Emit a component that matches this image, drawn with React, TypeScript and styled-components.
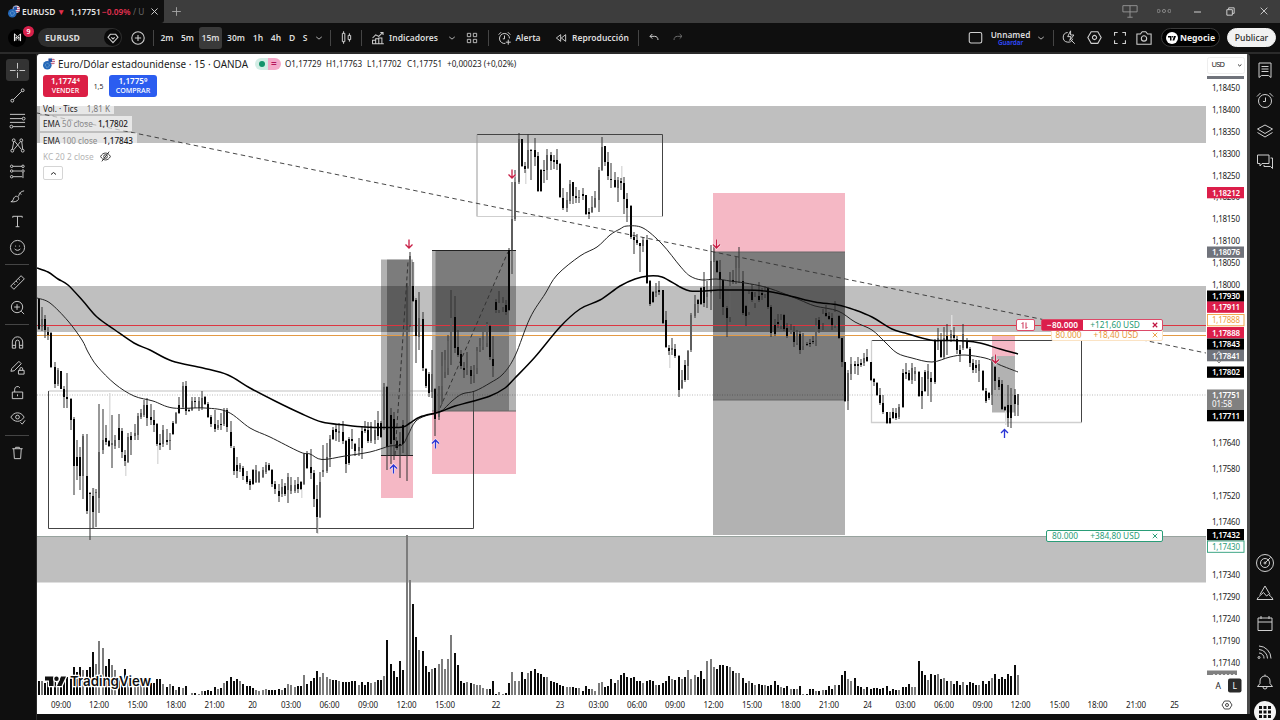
import React from "react";
import styled, { createGlobalStyle } from "styled-components";

const GlobalStyle = createGlobalStyle`
  * {
    box-sizing: border-box;
  }
  body {
    margin: 0;
    background: #0f0f0f;
    font-family: "Noto Sans", "Open Sans", sans-serif;
    overflow: hidden;
  }
`;

const Page = styled.div`
  display: flex;
  flex-direction: column;
  width: 1280px;
  height: 720px;
  background: #0f0f0f;
  color: #dbdbdb;
  overflow: hidden;
`;

const TabBar = styled.header`
  display: flex;
  flex: none;
  align-items: stretch;
  height: 23px;
  background: #3d3d3d;
`;

const Tab = styled.div`
  display: flex;
  align-items: center;
  width: 164px;
  padding-left: 8px;
  background: #0f0f0f;
  border-radius: 0 0 3px 0;
  font-size: 8.3px;
  font-weight: 600;
  white-space: nowrap;
`;

const TabText = styled.span<{ $w: number; $color?: string; $weight?: number }>`
  width: ${({ $w }) => $w}px;
  color: ${({ $color }) => $color || "#e6e6e6"};
  font-weight: ${({ $weight }) => $weight || 600};
  overflow: hidden;
`;

const TabSymbol = styled(TabText)`
  margin-left: 2px;
  font-size: 8.4px;
`;

const Spacer = styled.div`
  flex: 1;
`;

const Toolbar = styled.div`
  display: flex;
  flex: none;
  align-items: center;
  height: 31px;
  padding-right: 4px;
  border-bottom: 2px solid #2b2b2b;
`;

const Slot = styled.div<{ $w: number; $ml?: number; $mr?: number; $active?: boolean }>`
  position: relative;
  display: flex;
  flex: none;
  align-items: center;
  justify-content: center;
  width: ${({ $w }) => $w}px;
  height: 22px;
  margin-left: ${({ $ml }) => $ml || 0}px;
  margin-right: ${({ $mr }) => $mr || 0}px;
  border-radius: 3px;
  background: ${({ $active }) => ($active ? "#3a3a3a" : "transparent")};
  font-size: 8.5px;
  font-weight: 600;
  white-space: nowrap;
`;

const Divider = styled.div<{ $ml?: number; $mr?: number }>`
  flex: none;
  width: 1px;
  height: 16px;
  margin-left: ${({ $ml }) => $ml || 0}px;
  margin-right: ${({ $mr }) => $mr || 0}px;
  background: #454545;
`;

const Avatar = styled.div`
  display: flex;
  align-items: center;
  justify-content: center;
  width: 18px;
  height: 18px;
  border-radius: 50%;
  background: #000;
`;

const Badge = styled.span`
  position: absolute;
  top: -1px;
  right: 0;
  width: 11px;
  height: 11px;
  border-radius: 50%;
  background: #d7214b;
  color: #fff;
  font-size: 7px;
  line-height: 11px;
  text-align: center;
`;

const SearchPill = styled.div`
  display: flex;
  align-items: center;
  justify-content: space-between;
  width: 84px;
  height: 19px;
  margin-left: 4px;
  padding: 0 1px 0 7px;
  border-radius: 10px;
  background: #2e2e2e;
  font-size: 8.7px;
  font-weight: 700;
`;

const PillIcon = styled.span`
  display: flex;
  align-items: center;
  justify-content: center;
  width: 17px;
  height: 17px;
  border-radius: 50%;
  background: #0a0a0a;
`;

const LayoutName = styled.div`
  display: flex;
  flex-direction: column;
  align-items: center;
  line-height: 9px;
  font-size: 8.3px;
  small {
    color: #2f4bff;
    font-size: 6.3px;
    line-height: 7px;
  }
`;

const PillButton = styled.button<{ $w: number; $light?: boolean }>`
  display: flex;
  flex: none;
  align-items: center;
  justify-content: center;
  gap: 2px;
  width: ${({ $w }) => $w}px;
  height: 19px;
  margin-left: ${({ $light }) => ($light ? 7 : 0)}px;
  padding: 0;
  border: 1px solid ${({ $light }) => ($light ? "#f2f2f2" : "#3a3a3a")};
  border-radius: 10px;
  background: ${({ $light }) => ($light ? "#f2f2f2" : "#000")};
  color: ${({ $light }) => ($light ? "#2a2a2a" : "#f0f0f0")};
  font-family: inherit;
  font-size: 8.6px;
  font-weight: ${({ $light }) => ($light ? 500 : 700)};
`;

const Body = styled.main`
  display: flex;
  flex: none;
  height: 660px;
`;

const LeftBar = styled.nav`
  display: flex;
  flex-direction: column;
  align-items: center;
  flex: none;
  width: 37px;
  height: 666px;
  padding: 3.4px 2px 0 0;
  border-right: 1px solid #2b2b2b;
`;

const RightBar = styled.nav`
  display: flex;
  flex-direction: column;
  align-items: center;
  flex: none;
  width: 30px;
  height: 673px;
  padding-top: 0.3px;
`;

const SideItem = styled.div<{ $h: number }>`
  display: flex;
  flex: none;
  align-items: center;
  justify-content: center;
  height: ${({ $h }) => $h}px;
`;

const SideActive = styled.div`
  display: flex;
  align-items: center;
  justify-content: center;
  width: 23px;
  height: 22px;
  border-radius: 3px;
  background: #333;
`;

const SideDivider = styled.div`
  flex: none;
  width: 24px;
  height: 1px;
  margin: 4px 0 4.6px;
  background: #454545;
`;

const AppsButton = styled.div`
  display: flex;
  align-items: center;
  justify-content: center;
  width: 22px;
  height: 22px;
  border-radius: 50%;
  background: #f4f4f4;
`;

const ChartPanel = styled.section`
  position: relative;
  flex: none;
  width: 1213px;
  height: 660px;
  border-right: 3px solid #4a4a4a;
  border-radius: 3px 3px 0 0;
  background: #fff;
  overflow: hidden;
`;

const ChartSvg = styled.svg`
  display: block;
`;

const Legend = styled.div`
  position: absolute;
  top: 2px;
  left: 3px;
  display: flex;
  flex-direction: column;
  align-items: flex-start;
  color: #1b1b1b;
  white-space: nowrap;
`;

const TitleRow = styled.div`
  display: flex;
  align-items: center;
  height: 15px;
  padding-left: 3px;
`;

const Title = styled.span`
  width: 193px;
  margin-left: 3px;
  font-size: 9.95px;
`;

const StatusPill = styled.span`
  display: flex;
  align-items: center;
  width: 26px;
  height: 12px;
  margin-left: 4px;
  border-radius: 6px;
  background: linear-gradient(90deg, #d3ede5 50%, #f4a9c9 50%);
  color: #b3155c;
  font-size: 10px;
  font-weight: 600;
  line-height: 11px;
`;

const StatusDot = styled.i`
  width: 6px;
  height: 6px;
  margin: 0 6px 0 4px;
  border-radius: 50%;
  background: #15936b;
`;

const Ohlc = styled.span<{ $w: number }>`
  width: ${({ $w }) => $w}px;
  padding-left: 4px;
  font-size: 8.15px;
`;

const TradeRow = styled.div`
  display: flex;
  align-items: center;
  height: 22px;
  margin: 4px 0 5px 3px;
`;

const TradeButton = styled.div<{ $w: number; $color: string }>`
  width: ${({ $w }) => $w}px;
  height: 22px;
  padding-top: 1px;
  border-radius: 3px;
  background: ${({ $color }) => $color};
  color: #fff;
  font-size: 8.1px;
  font-weight: 600;
  line-height: 10px;
  text-align: center;
  sup {
    font-size: 6px;
    line-height: 0;
    vertical-align: 2px;
  }
  span {
    display: block;
    font-size: 7.1px;
    font-weight: 500;
    line-height: 9px;
  }
`;

const Spread = styled.div`
  width: 21px;
  font-size: 6.8px;
  text-align: center;
`;

const StudyRow = styled.div<{ $w: number; $h: number; $plain?: boolean }>`
  display: flex;
  align-items: center;
  width: ${({ $w }) => $w}px;
  height: ${({ $h }) => $h}px;
  margin-bottom: 2px;
  padding-left: 3px;
  background: ${({ $plain }) => ($plain ? "transparent" : "rgba(255, 255, 255, 0.62)")};
  color: ${({ $plain }) => ($plain ? "#b5b5b5" : "#1b1b1b")};
  font-size: ${({ $plain }) => ($plain ? 8.3 : 8.1)}px;
  span {
    color: #8a8a8a;
    margin: 0 2px;
  }
  b {
    margin-left: auto;
    padding-right: 4px;
    font-weight: 500;
  }
  i {
    margin-left: auto;
    padding-right: 4px;
    color: #777;
    font-style: normal;
  }
  svg {
    margin-left: 6px;
  }
`;

const Collapse = styled.div`
  display: flex;
  align-items: center;
  justify-content: center;
  width: 20px;
  height: 14px;
  margin: 1px 0 0 3px;
  border: 1px solid #d5d5d5;
  border-radius: 2px;
`;

const OrderTag = styled.div<{ $x: number; $y: number; $w: number; $h?: number; $color: string; $faint?: boolean }>`
  position: absolute;
  left: ${({ $x }) => $x}px;
  top: ${({ $y }) => $y}px;
  display: flex;
  align-items: center;
  width: ${({ $w }) => $w}px;
  height: ${({ $h }) => $h || 12}px;
  border: 1px solid ${({ $color, $faint }) => ($faint ? "#fbe3c4" : $color)};
  border-radius: 2px;
  background: #fff;
  color: ${({ $color }) => $color};
  font-size: 8.3px;
  line-height: 10px;
  white-space: nowrap;
`;

const OrderQty = styled.span<{ $w: number; $fill?: boolean }>`
  width: ${({ $w }) => $w}px;
  height: 100%;
  background: ${({ $fill }) => ($fill ? "#db1f4b" : "transparent")};
  color: ${({ $fill }) => ($fill ? "#fff" : "inherit")};
  font-weight: ${({ $fill }) => ($fill ? 600 : 400)};
  text-align: center;
`;

const OrderProfit = styled.span<{ $color?: string }>`
  flex: 1;
  color: ${({ $color }) => $color || "inherit"};
  text-align: center;
`;

const OrderClose = styled.span`
  display: flex;
  justify-content: center;
  width: 15px;
`;

interface IconProps {
  d: string;
  size?: number;
  color?: string;
  width?: number;
}

const Icon: React.FC<IconProps> = ({ d, size = 18, color = "#cfcfcf", width = 1 }) => (
  <svg width={size} height={size} viewBox="0 0 18 18" fill="none" stroke={color} strokeWidth={width}>
    <path d={d} />
  </svg>
);

const icons = {
  cross: "M9 1v6M9 11v6M1 9h6M11 9h6M8.5 9h1",
  trend: "M4.5 13.5l9-9M2 14.5a1.5 1.5 0 1 0 3 0a1.5 1.5 0 1 0-3 0M13 3.5a1.5 1.5 0 1 0 3 0a1.5 1.5 0 1 0-3 0",
  fib: "M1 2.500h16M1 7h13M14 7a1.5 1.5 0 1 0 3 0a1.5 1.5 0 1 0-3 0M1 11h16M4 15.500h13M1 15.500a1.5 1.5 0 1 0 3 0a1.5 1.5 0 1 0-3 0",
  pattern: "M3.500 13L5 5M6 4.500l7 8.500M5 13.500l7-8.500M13.500 5l1 8M2 14.500a1.500 1.500 0 1 0 3 0a1.500 1.500 0 1 0-3 0M3.500 3.500a1.500 1.500 0 1 0 3 0a1.500 1.500 0 1 0-3 0M11.500 3.500a1.500 1.500 0 1 0 3 0a1.500 1.500 0 1 0-3 0M13 14.500a1.500 1.500 0 1 0 3 0a1.500 1.500 0 1 0-3 0",
  forecast: "M4 3.500h10M4 8.500h9M4 14.500h10M1.500 3.500a1.300 1.300 0 1 0 2.600 0a1.300 1.300 0 1 0-2.600 0M13.500 3.500a1.300 1.300 0 1 0 2.600 0a1.300 1.300 0 1 0-2.600 0M1.500 8.500a1.300 1.300 0 1 0 2.600 0a1.300 1.300 0 1 0-2.600 0M1.500 14.500a1.300 1.300 0 1 0 2.600 0a1.300 1.300 0 1 0-2.600 0M13.500 8.500a1.300 1.300 0 1 0 2.600 0a1.300 1.300 0 1 0-2.600 0M14.800 10v6",
  brush: "M2 14.500c3 0 2-4 4.500-5.500c2-1 4.500 1 3.500 3c-1 2.500-5 3-8 2.500M10 9c1-4 3-5.500 6-6M11 5l2 2",
  text: "M4 5V3.500h10V5M9 3.500v11M7 14.500h4",
  smile: "M1.500 9a7.500 7.500 0 1 0 15 0a7.500 7.500 0 1 0-15 0M6.500 7.500h1M10.500 7.500h1M6 10.500c1.500 2 4.500 2 6 0",
  ruler: "M1.800 12.800l11-11l3.400 3.400l-11 11zM5 10l1.500 1.500M7.500 7.500L9 9M10 5l1.500 1.500",
  zoom: "M2.500 8.500a6 6 0 1 0 12 0a6 6 0 1 0-12 0M13 13l3 3M8.500 5.500v6M5.500 8.500h6",
  magnet: "M3.500 15V8.500a5.500 5.500 0 0 1 11 0V15h-3.500V8.500a2 2 0 0 0-4 0V15zM3.500 12h3.500M11 12h3.500",
  pencilLock: "M2 13l1-3l7.500-7.500l2.500 2.500l-7.500 7.500zM10 12h6v4h-6zM11.500 12v-1.500a1.500 1.500 0 0 1 3 0V12",
  lock: "M3.500 8.500h11v7h-11zM6 8.500V5.500a3 3 0 0 1 5.500-1.500M9 11v2",
  eye: "M2 7.500c3.500-6 10.500-6 14 0c-3.500 6-10.500 6-14 0M7 7.500a2 2 0 1 0 4 0a2 2 0 1 0-4 0M12 13l2 2l3-4",
  trash: "M3.500 5h11M5 5l.700 10.500h6.600L13 5M7 5V3.500h4V5",
  list: "M3 2h12v14.500l-2.500-2h-7l-2.500 2zM5.500 5.500h7M5.500 8h7M5.500 10.500h7",
  alarm: "M2.500 10a6.500 6.500 0 1 0 13 0a6.500 6.500 0 1 0-13 0M9.500 6.500V10.500H7M1 5.500l3.500-3.500M17 5.500l-3.500-3.500",
  layers: "M9 3l7.500 4L9 11.500L1.500 7zM1.500 10.500L9 15l7.500-4.500",
  chat: "M1.500 3h11.500v8.500h-7l-2 2.500v-2.500h-2.500zM14.500 6h2v10.500l-2-2H8v-1.500",
  target: "M0.500 9a8.500 8.500 0 1 0 17 0a8.500 8.500 0 1 0-17 0M4.500 9a4.500 4.500 0 1 0 9 0a4.500 4.500 0 1 0-9 0M9 9l5.500-5.500M8 9a1 1 0 1 0 2 0a1 1 0 1 0-2 0",
  pyramid: "M9 2l5 8.500M9 2l-5 8.500M2.500 13l-1.500 2.500h16l-1.500-2.500M3 12.500l4.500-4l3 3.500l2-1.500l3 2.500",
  calendar: "M2 4h14v12.500H2zM2 8h14M5 2v3M13 2v3",
  feed: "M2 14.500a1 1 0 1 0 2 0a1 1 0 1 0-2 0M3 10a5 5 0 0 1 5 5.500M3 6.500a9 9 0 0 1 8.500 9M3 3a12.500 12.500 0 0 1 12 12.500",
  bell: "M1.500 13.500h15l-2.500-3V8a5 5 0 0 0-10 0v2.500zM7 14a2 2 0 0 0 4 0M9 3V1.500",
  plus: "M2 9a7 7 0 1 0 14 0a7 7 0 1 0-14 0M9 5.500v7M5.500 9h7",
  plain: "M9 3v12M3 9h12",
  close: "M4 4l10 10M14 4L4 14",
  chevron: "M4 7l5 4l5-4",
  chevronUp: "M4 11l5-4l5 4",
  candles: "M4 4h3v10H4zM5.500 1.500V4M5.500 14v2.500M11 6.500h3v5h-3zM12.500 4v2.500M12.500 11.500V14",
  indicators: "M2 16v-4h4v4M6 16v-6h4v6M10 16V9h4v7M1.500 16.500h15M2 9l4-4l4 2l5-5M12 2h3.500v3",
  grid: "M2 2h5v5H2zM11 2h5v5H11zM2 11h5v5H2zM11 11h5v5H11z",
  alert: "M10 15.500a6 6 0 1 1 5-6M9 6v4H7M2 5l3-3M13 2l3 3M13.500 11v6M10.500 14h6",
  rewind: "M8.500 4v10L2 9zM16 4v10L9.500 9z",
  undo: "M6.500 3L3 6.500L6.500 10M3 6.500h7c3 0 5 2 5 5.500",
  redo: "M11.500 3L15 6.500L11.500 10M15 6.500H8c-3 0-5 2-5 5.500",
  square: "M3.500 3h11a2 2 0 0 1 2 2v8.500a2 2 0 0 1-2 2h-11a2 2 0 0 1-2-2V5a2 2 0 0 1 2-2z",
  quick: "M12 12l4.500 4.500M8 3a5.800 5.800 0 1 0 6 7.500M11.500 1L8 8h4l-1.500 4.500L15.500 6h-4z",
  hex: "M5 2h8l4 7l-4 7H5L1 9zM6.500 9a2.500 2.500 0 1 0 5 0a2.500 2.500 0 1 0-5 0",
  full: "M2 6V2h4M12 2h4v4M16 12v4h-4M6 16H2v-4",
  camera: "M1 4.500h4L7 2h4l2 2.500h4v11.500H1zM6 9.500a3 3 0 1 0 6 0a3 3 0 1 0-6 0",
  diamond: "M5 3.500h8l3.500 4.500L9 16L1.500 8zM6.500 8l2.500 2.500l2.500-2.500",
  hidden: "M1 9c3.500-7.500 12.500-7.500 16 0c-3.500 7.500-12.500 7.500-16 0M6 9a3 3 0 1 0 6 0a3 3 0 1 0-6 0M3 17L15 1",
  screens: "M1 3h16v7H1zM9 3v13M6 16h6",
  windows: "M3 6h9v9H3zM6 6V3h9v9h-3",
  minimize: "M2 10h14",
  swap: "M6 15V3M3 6l3-3M12 3v12M15 12l-3 3",
};

const PairLogo: React.FC = () => (
  <svg width="12" height="13" viewBox="0 0 12 13">
    <circle cx="8.300" cy="4.200" r="3.700" fill="#ecdfe8" />
    <path d="M5.500 1.500h3.500v3.500h-3.500z" fill="#2552a3" />
    <path d="M9 2.500h2.500M9 4.500h3M7 6.500h4.500" stroke="#c04a68" strokeWidth="0.8" />
    <circle cx="4.300" cy="8.300" r="4.300" fill="#2468b8" />
    <circle cx="4.300" cy="8.300" r="2" fill="none" stroke="#9cc3df" strokeWidth="0.7" strokeDasharray="1 0.6" />
  </svg>
);

// high, body top, body bottom, low, 1 = filled
type Candle = [number, number, number, number, number];

const candles: Candle[] = [
  [298, 299, 329, 330, 1], [307, 319, 327, 331, 0], [315, 319, 330, 338, 1], [327, 332, 335, 340, 1],
  [332, 333, 367, 368, 1], [362, 367, 384, 388, 1], [368, 370, 384, 386, 0], [371, 371, 389, 389, 1],
  [386, 389, 397, 408, 1], [373, 397, 399, 408, 1], [398, 399, 420, 430, 1], [417, 419, 466, 495, 1],
  [440, 457, 466, 480, 1], [447, 457, 476, 490, 1], [434, 436, 476, 499, 0], [434, 476, 511, 514, 1],
  [492, 493, 494, 540, 1], [488, 496, 512, 528, 1], [489, 492, 493, 527, 0], [404, 452, 498, 513, 0],
  [409, 440, 450, 454, 0], [425, 438, 442, 445, 1], [440, 441, 446, 447, 1], [415, 443, 445, 468, 0],
  [435, 440, 446, 449, 0], [414, 428, 440, 448, 1], [428, 431, 452, 458, 1], [450, 455, 461, 466, 1],
  [433, 437, 462, 463, 0], [432, 436, 440, 455, 1], [424, 433, 436, 440, 0], [413, 416, 435, 440, 0],
  [409, 413, 417, 419, 0], [400, 405, 415, 417, 0], [398, 405, 418, 426, 1], [404, 417, 420, 425, 1],
  [410, 420, 425, 432, 1], [423, 424, 444, 446, 1], [434, 443, 445, 450, 1], [425, 430, 444, 447, 0],
  [429, 440, 442, 445, 1], [433, 440, 441, 450, 0], [421, 423, 434, 435, 1], [412, 413, 423, 424, 0],
  [397, 405, 413, 414, 1], [382, 386, 407, 409, 0], [381, 386, 411, 415, 1], [408, 410, 411, 412, 1],
  [397, 401, 410, 411, 0], [397, 401, 402, 408, 1], [397, 401, 408, 411, 0], [391, 398, 408, 410, 0],
  [396, 397, 404, 405, 1], [402, 404, 417, 418, 1], [415, 417, 424, 427, 1], [410, 424, 429, 432, 1],
  [420, 425, 428, 430, 0], [413, 424, 425, 430, 1], [408, 411, 424, 426, 0], [408, 410, 427, 432, 1],
  [421, 432, 446, 448, 1], [446, 448, 471, 475, 1], [457, 465, 471, 478, 1], [463, 465, 469, 472, 0],
  [466, 468, 476, 480, 1], [471, 476, 482, 484, 1], [479, 481, 485, 490, 1], [469, 470, 484, 485, 1],
  [465, 470, 482, 483, 0], [471, 472, 482, 483, 0], [467, 470, 477, 478, 0], [462, 465, 472, 474, 0],
  [463, 465, 470, 471, 1], [469, 470, 484, 487, 1], [481, 484, 489, 494, 1], [484, 491, 496, 502, 1],
  [479, 487, 494, 497, 0], [483, 486, 494, 496, 1], [473, 477, 490, 503, 0], [477, 485, 491, 494, 0],
  [480, 485, 491, 493, 0], [477, 484, 489, 493, 1], [481, 482, 489, 490, 1], [453, 454, 484, 485, 0],
  [451, 454, 468, 469, 1], [449, 467, 473, 479, 1], [470, 473, 499, 507, 1], [485, 499, 517, 533, 1],
  [472, 482, 517, 518, 0], [445, 470, 472, 477, 0], [443, 457, 471, 473, 0], [435, 439, 457, 467, 0],
  [427, 430, 439, 440, 1], [425, 429, 432, 441, 1], [423, 431, 433, 442, 0], [421, 432, 441, 444, 1],
  [440, 441, 464, 473, 1], [437, 439, 463, 465, 1], [429, 439, 441, 449, 1], [443, 444, 451, 456, 1],
  [438, 447, 451, 456, 0], [427, 431, 448, 459, 1], [421, 429, 431, 433, 1], [422, 430, 441, 443, 1],
  [422, 426, 441, 443, 0], [420, 430, 440, 444, 0], [411, 423, 436, 440, 1], [421, 423, 437, 438, 1],
  [383, 387, 420, 430, 0], [386, 387, 447, 470, 1], [408, 415, 444, 464, 1], [412, 419, 440, 460, 1],
  [440, 441, 448, 450, 1], [432, 444, 446, 478, 1], [420, 425, 444, 453, 1], [283, 330, 430, 481, 0],
  [252, 256, 325, 327, 0], [262, 286, 301, 302, 1], [298, 300, 336, 363, 1], [292, 318, 337, 350, 0],
  [312, 319, 368, 371, 1], [368, 369, 386, 388, 1], [372, 374, 393, 397, 1], [350, 374, 392, 398, 0],
  [388, 389, 419, 436, 1], [386, 390, 417, 420, 0], [352, 366, 386, 404, 0], [350, 360, 372, 378, 0],
  [335, 341, 368, 375, 0], [290, 318, 340, 365, 0], [296, 317, 348, 353, 1], [330, 347, 355, 357, 1],
  [350, 354, 366, 369, 1], [362, 368, 370, 378, 1], [352, 368, 370, 375, 0], [366, 370, 376, 384, 1],
  [365, 370, 375, 383, 0], [347, 351, 368, 374, 0], [338, 346, 350, 352, 0], [332, 340, 347, 350, 0],
  [322, 324, 343, 347, 0], [325, 326, 357, 360, 1], [336, 359, 366, 377, 1], [299, 302, 310, 313, 1],
  [291, 303, 310, 313, 0], [297, 303, 307, 312, 0], [300, 305, 312, 315, 1], [248, 250, 310, 311, 1],
  [182, 219, 250, 274, 0], [170, 182, 219, 221, 0], [133, 139, 182, 184, 0], [139, 139, 166, 167, 1],
  [162, 166, 169, 173, 1], [134, 150, 168, 169, 0], [149, 150, 151, 180, 1], [138, 150, 157, 166, 1],
  [152, 156, 191, 192, 1], [169, 170, 191, 192, 1], [160, 170, 171, 183, 1], [149, 155, 170, 180, 0],
  [152, 155, 161, 170, 1], [155, 160, 162, 169, 1], [149, 160, 164, 170, 1], [163, 164, 197, 198, 1],
  [188, 198, 208, 210, 1], [192, 200, 208, 212, 0], [180, 184, 201, 204, 0], [182, 182, 196, 204, 1],
  [187, 196, 198, 203, 1], [190, 197, 198, 203, 0], [188, 194, 196, 200, 1], [195, 195, 214, 215, 1],
  [208, 212, 214, 219, 1], [196, 207, 212, 213, 0], [191, 198, 207, 208, 0], [167, 170, 200, 212, 0],
  [137, 147, 170, 171, 0], [146, 146, 162, 166, 1], [152, 162, 176, 180, 1], [163, 179, 180, 188, 1],
  [172, 180, 187, 188, 1], [177, 180, 188, 202, 0], [178, 181, 183, 190, 1], [177, 183, 199, 214, 1],
  [193, 199, 208, 222, 1], [205, 206, 237, 239, 1], [232, 237, 240, 254, 1], [234, 240, 243, 245, 1],
  [243, 243, 246, 272, 1], [237, 240, 246, 252, 0], [235, 240, 283, 284, 1], [280, 281, 304, 306, 1],
  [291, 292, 302, 303, 1], [283, 291, 293, 297, 0], [281, 290, 292, 295, 1], [290, 290, 323, 324, 1],
  [311, 320, 347, 348, 1], [345, 348, 351, 355, 1], [338, 348, 350, 355, 0], [344, 349, 356, 358, 1],
  [355, 356, 390, 397, 1], [370, 380, 388, 389, 0], [360, 365, 380, 382, 1], [350, 351, 366, 380, 0],
  [313, 315, 350, 352, 0], [295, 304, 316, 318, 0], [299, 300, 304, 313, 1], [287, 288, 304, 305, 1],
  [272, 287, 303, 307, 1], [281, 293, 297, 308, 0], [245, 261, 293, 310, 0], [246, 260, 261, 262, 0],
  [260, 261, 272, 273, 1], [260, 272, 280, 299, 1], [280, 280, 307, 315, 1], [306, 308, 318, 337, 1],
  [272, 282, 317, 322, 0], [270, 280, 282, 284, 1], [257, 268, 281, 284, 0], [247, 268, 282, 283, 0],
  [271, 281, 313, 315, 1], [305, 306, 316, 326, 1], [290, 294, 312, 315, 0], [284, 292, 300, 302, 1],
  [292, 297, 303, 308, 0], [282, 296, 300, 302, 1], [288, 293, 295, 300, 1], [286, 290, 294, 298, 0],
  [287, 288, 307, 309, 1], [305, 307, 333, 337, 1], [319, 325, 334, 336, 1], [314, 322, 324, 328, 1],
  [314, 320, 326, 329, 0], [314, 315, 329, 331, 1], [323, 328, 336, 338, 1], [324, 330, 332, 334, 0],
  [326, 332, 342, 347, 1], [330, 333, 343, 345, 0], [331, 334, 350, 354, 1], [333, 335, 346, 350, 0],
  [342, 344, 345, 346, 1], [339, 343, 344, 347, 1], [336, 341, 342, 344, 1], [318, 325, 340, 346, 0],
  [317, 320, 329, 333, 1], [309, 314, 323, 330, 0], [305, 313, 316, 317, 1], [312, 316, 319, 320, 1],
  [313, 318, 325, 330, 1], [301, 312, 326, 328, 0], [315, 316, 338, 339, 1], [338, 338, 362, 367, 1],
  [362, 362, 401, 402, 1], [370, 373, 401, 410, 0], [357, 364, 374, 380, 0], [361, 364, 366, 374, 1],
  [357, 364, 366, 375, 1], [359, 363, 365, 367, 1], [353, 358, 363, 366, 0], [349, 357, 361, 362, 1],
  [362, 362, 380, 381, 1], [378, 379, 382, 386, 1], [382, 383, 395, 396, 1], [388, 395, 403, 405, 1],
  [395, 403, 412, 414, 1], [412, 412, 423, 424, 1], [412, 418, 423, 424, 1], [408, 412, 418, 419, 1],
  [408, 413, 418, 420, 1], [404, 407, 417, 419, 0], [369, 373, 407, 408, 1], [363, 372, 374, 379, 1],
  [370, 373, 380, 381, 1], [363, 368, 380, 384, 0], [367, 371, 374, 381, 0], [371, 372, 396, 397, 1],
  [377, 391, 396, 409, 1], [370, 372, 391, 392, 1], [364, 371, 379, 396, 0], [372, 378, 382, 402, 1],
  [339, 340, 382, 384, 1], [328, 338, 340, 350, 0], [333, 340, 357, 358, 1], [327, 338, 357, 359, 0],
  [324, 336, 340, 355, 1], [330, 334, 338, 342, 0], [327, 335, 338, 341, 1], [336, 339, 350, 354, 1],
  [345, 350, 354, 362, 1], [324, 334, 348, 350, 0], [338, 342, 348, 349, 1], [347, 349, 363, 367, 1],
  [359, 363, 370, 373, 1], [360, 365, 368, 373, 1], [360, 364, 371, 382, 0], [370, 371, 390, 391, 1],
  [388, 391, 401, 403, 1], [392, 393, 398, 400, 1], [357, 360, 395, 405, 0], [366, 367, 381, 390, 1],
  [377, 380, 387, 390, 1], [380, 384, 409, 410, 1], [406, 407, 410, 411, 1], [385, 405, 418, 427, 1],
  [388, 405, 418, 428, 1], [389, 395, 404, 416, 1], [394, 394, 405, 416, 0],
];

const volumes = [
  14, 14, 12, 14, 13, 14, 15, 16, 17, 18, 18, 28, 23, 28, 25, 25, 28, 43, 31, 54, 47, 29, 36, 30, 25, 18, 18, 26, 17, 14,
  15, 15, 14, 13, 13, 12, 12, 16, 16, 11, 8, 11, 9, 5, 8, 7, 9, 0, 2, 2, 1, 4, 4, 5, 4, 8, 6, 7, 12, 14,
  18, 14, 16, 14, 11, 9, 9, 7, 5, 4, 5, 6, 5, 5, 5, 6, 5, 7, 11, 10, 8, 9, 9, 20, 11, 14, 17, 24, 18, 22,
  18, 16, 15, 15, 14, 13, 13, 13, 14, 14, 10, 13, 10, 13, 12, 13, 15, 15, 19, 55, 31, 24, 18, 34, 25, 160, 115, 91, 58, 45,
  44, 29, 23, 26, 27, 31, 36, 26, 36, 60, 42, 30, 14, 12, 13, 12, 11, 10, 10, 7, 6, 6, 14, 1, 3, 1, 2, 12, 23, 14,
  14, 23, 16, 22, 24, 26, 22, 21, 18, 18, 14, 13, 12, 10, 9, 8, 8, 8, 7, 7, 4, 9, 6, 6, 4, 12, 13, 8, 9, 16,
  12, 15, 20, 22, 18, 17, 18, 14, 14, 12, 14, 15, 14, 10, 10, 12, 14, 19, 16, 15, 18, 16, 18, 25, 16, 20, 18, 24, 16, 34,
  36, 28, 26, 30, 30, 29, 28, 24, 22, 22, 17, 12, 14, 12, 10, 11, 10, 10, 9, 10, 14, 10, 8, 7, 9, 6, 6, 6, 9, 1,
  1, 6, 6, 4, 4, 5, 5, 9, 6, 10, 10, 20, 24, 16, 14, 17, 9, 8, 6, 8, 6, 7, 7, 6, 7, 9, 4, 6, 5, 5,
  8, 8, 11, 8, 8, 34, 24, 20, 15, 21, 20, 21, 16, 17, 14, 14, 11, 14, 10, 13, 10, 13, 12, 10, 10, 14, 11, 14, 17, 21,
  16, 18, 16, 21, 19, 30, 20,
];

// long shadows drawn in a lighter tone: x, top, bottom
const paleWicks = [
  [93, 488, 528], [109, 393, 441], [125, 462, 476], [157, 446, 464], [301, 490, 498], [317, 518, 534], [413, 262, 296],
  [525, 170, 184], [621, 166, 180], [669, 352, 368], [951, 315, 332], [1005, 408, 425],
];

type Point = [number, number];

const emaSlow: Point[] = [
  [37, 268], [48, 272], [58, 279], [68, 285], [83, 301], [97, 317], [115, 330], [134, 343], [150, 350], [172, 361],
  [203, 368], [228, 375], [250, 388], [275, 401], [300, 413], [322, 422], [345, 425], [365, 427], [385, 427.5],
  [403, 427], [410, 423], [420, 417], [435, 413], [442, 411], [455, 406], [470, 402], [490, 396], [505, 388],
  [515, 378], [535, 357], [560, 327], [580, 309], [600, 300], [620, 286], [635, 279], [648, 276], [662, 277],
  [680, 287], [690, 291], [705, 291], [718, 290], [735, 290], [765, 291], [790, 296], [815, 302], [838, 305],
  [855, 310], [872, 317], [892, 329], [905, 333], [930, 340], [945, 340.5], [965, 341], [980, 343], [1000, 349],
  [1018, 354],
];

const emaFast: Point[] = [
  [37, 298], [50, 303], [68, 321], [82, 340], [88, 352], [97, 366], [115, 384], [134, 396], [153, 401], [173, 408],
  [205, 408], [228, 412], [250, 428], [270, 437], [300, 452], [310, 454], [322, 459.5], [345, 456], [370, 452],
  [390, 446], [402, 445], [408, 435], [415, 422], [425, 416], [440, 412], [452, 401], [462, 394], [475, 391],
  [490, 383], [503, 374], [515, 356], [530, 318], [545, 294], [557, 275], [580, 256], [597, 247], [610, 235],
  [620, 229], [627, 226], [643, 228], [662, 244], [680, 266], [690, 276], [702, 280], [716, 279], [730, 281],
  [745, 283], [765, 287], [785, 294], [800, 300], [815, 306], [838, 311], [855, 322], [872, 330], [885, 342],
  [897, 353], [912, 358], [932, 362], [950, 357], [965, 355], [985, 358], [995, 362], [1000, 365], [1018, 372],
];

const smoothPath = (points: Point[]) =>
  points.reduce((path, [x, y], index) => {
    if (index === 0) {
      return `M${x} ${y}`;
    }
    const [px, py] = points[index - 1];
    const [bx, by] = points[index - 2] || points[index - 1];
    const [nx, ny] = points[index + 1] || points[index];
    const c1 = `${px + (x - bx) / 6} ${py + (y - by) / 6}`;
    const c2 = `${x - (nx - px) / 6} ${y - (ny - py) / 6}`;
    return `${path}C${c1} ${c2} ${x} ${y}`;
  }, "");

const priceTicks: [string, number][] = [
  ["1,18450", 88], ["1,18400", 110], ["1,18350", 132], ["1,18300", 154], ["1,18250", 176], ["1,18200", 197],
  ["1,18150", 219], ["1,18100", 241], ["1,18050", 263], ["1,18000", 285], ["1,17640", 443], ["1,17580", 469],
  ["1,17520", 496], ["1,17460", 522], ["1,17340", 575], ["1,17290", 597], ["1,17240", 619], ["1,17190", 641],
  ["1,17140", 663],
];

const priceTags: { label: string; y: number; fill: string; color?: string }[] = [
  { label: "1,18212", y: 192.5, fill: "#dc1e4a" },
  { label: "1,18076", y: 252, fill: "#70737b" },
  { label: "1,17930", y: 296, fill: "#000" },
  { label: "1,17911", y: 307, fill: "#dc1e4a" },
  { label: "1,17888", y: 320, fill: "#fff", color: "#f0a040" },
  { label: "1,17888", y: 332.5, fill: "#dc1e4a" },
  { label: "1,17843", y: 344, fill: "#000" },
  { label: "1,17841", y: 355.5, fill: "#70737b" },
  { label: "1,17802", y: 372, fill: "#000" },
  { label: "1,17711", y: 415.5, fill: "#000" },
  { label: "1,17432", y: 534.5, fill: "#000" },
  { label: "1,17430", y: 546.5, fill: "#fff", color: "#2a9d78" },
];

const timeTicks: [string, number][] = [
  ["09:00", 61], ["12:00", 99], ["15:00", 137.5], ["18:00", 176], ["21:00", 214.5], ["20", 252.5], ["03:00", 291],
  ["06:00", 329.5], ["09:00", 368], ["12:00", 406.5], ["15:00", 445], ["22", 496], ["23", 560], ["03:00", 598.5],
  ["06:00", 637], ["09:00", 675], ["12:00", 713.5], ["15:00", 752], ["18:00", 790.5], ["21:00", 829], ["24", 867.5],
  ["03:00", 905.5], ["06:00", 944], ["09:00", 982.5], ["12:00", 1020.5], ["15:00", 1059.5], ["18:00", 1097.5],
  ["21:00", 1136], ["25", 1174.5],
];

const barX = (index: number) => Math.round(37.6 + index * 3.2);

const Arrow: React.FC<{ x: number; y: number; up?: boolean }> = ({ x, y, up }) => (
  <g transform={`translate(${x} ${y}) scale(1 ${up ? -1 : 1})`} fill="none">
    <path d="M0 -4.500V4M-3.500 0.500L0 4L3.500 0.500" stroke="#fff" strokeWidth="3" opacity="0.6" />
    <path d="M0 -4.500V4M-3.500 0.500L0 4L3.500 0.500" stroke={up ? "#2a35d6" : "#c81e45"} strokeWidth="1.300" />
  </g>
);

const Chart: React.FC = () => (
  <ChartSvg width="1210" height="660" viewBox="37 54 1210 660" fontSize="8" fill="#222">
    <g fill="#bfbfbf">
      <rect x="37" y="106" width="1169" height="37" />
      <rect x="37" y="286" width="1169" height="46" />
      <rect x="37" y="536.500" width="1169" height="46" />
    </g>
    <path d="M37 536.500H1206" stroke="#98a39e" />

    <g>
      {volumes.map((value, index) => (
        <rect
          key={index}
          x={barX(index)}
          y={695 - value}
          width="2"
          height={value}
          fill={candles[index][4] ? "#0c0c0c" : "#7c7c7c"}
        />
      ))}
    </g>

    <path d="M37 395H1206" stroke="#bbb" strokeDasharray="1 1.500" />

    <g fill="#f5b8c5">
      <rect x="381" y="455" width="32" height="43" />
      <rect x="432" y="411" width="84" height="63" />
      <rect x="713" y="193" width="132" height="59" />
      <rect x="992" y="335" width="23" height="21" />
    </g>
    <g fillOpacity="0.300" fill="#000">
      <rect x="381" y="259.500" width="32" height="196" />
      <rect x="387" y="259.500" width="23" height="196" />
      <rect x="432" y="250" width="84" height="161" />
      <rect x="435.500" y="250" width="73.500" height="161" />
      <rect x="713" y="252" width="132" height="283" />
      <rect x="713" y="252" width="132" height="148" />
      <rect x="992" y="356" width="23" height="56.500" />
    </g>
    <path d="M381 455.500H413M432 250.500H516" stroke="#222" fill="none" />
    <path d="M432 411H516M713 252H845M713 400H845" stroke="#666" fill="none" />

    <g fill="none" stroke="#444">
      <path d="M48.500 391V528.500H473.500V391" />
      <path d="M477 134.500H662.500V216.500" />
      <path d="M871 340.500H1081.500V422.500" />
    </g>
    <path d="M477 134.500V216.500" stroke="#999" />
    <g fill="none" stroke="#cfcfcf">
      <path d="M48.500 391H473.500" strokeWidth="1.500" stroke="#888" opacity="0.350" />
      <path d="M477 216.500H662.500" />
      <path d="M871.500 340V422.500H1081.500" strokeWidth="1.300" />
    </g>

    <rect x="37" y="332" width="1169" height="3" fill="#fff" fillOpacity="0.250" />
    <rect x="37" y="325" width="1169" height="1" fill="#dc3540" />
    <rect x="37" y="335" width="1169" height="1" fill="#e39a45" />

    <path d="M37 113L1206 353" stroke="#333" strokeDasharray="4.500 3.500" strokeWidth="0.900" />
    <path d="M395 455L408 262M440 408L508 252" stroke="#333" strokeDasharray="4 3" />

    <g fill="#dcdcdc">
      {paleWicks.map(([x, top, bottom]) => (
        <rect key={x} x={x} y={top} width="1.500" height={bottom - top} />
      ))}
    </g>
    <g>
      {candles.map(([high, top, bottom, low, filled], index) => {
        const x = barX(index);
        return (
          <g key={index} fill={filled ? "#050505" : "#5e5e5e"}>
            <rect x={x + 0.5} y={high} width="1" height={low - high} fill="#333" />
            <rect x={x} y={top} width="2" height={Math.max(1, bottom - top)} />
          </g>
        );
      })}
    </g>

    <path d={smoothPath(emaFast)} fill="none" stroke="#222" />
    <path d={smoothPath(emaSlow)} fill="none" stroke="#000" strokeWidth="1.500" />

    <Arrow x={409} y={244} />
    <Arrow x={512} y={174} />
    <Arrow x={716.5} y={244} />
    <Arrow x={995.5} y={359} />
    <Arrow x={393.5} y={469} up />
    <Arrow x={435.5} y={444} up />
    <Arrow x={1004.5} y={433.5} up />

    <g fill="#111" stroke="#fff" strokeWidth="2.500" paintOrder="stroke">
      <path d="M45 676.500H53.500V686H49V680.500H45zM61 676.500H66L61.500 686H57z" />
      <circle cx="56.500" cy="678.800" r="2.200" />
      <text x="70" y="686.200" fontFamily="Inter" fontWeight="600" fontSize="13.500" textLength="81">
        TradingView
      </text>
    </g>

    <rect x="1206" y="54" width="41" height="660" fill="#fff" />
    {priceTicks.map(([label, y]) => (
      <text key={label} x="1212" y={y + 3.3} textLength="28">
        {label}
      </text>
    ))}
    <rect x="1207" y="76" width="37" height="3" fill="#70737b" />
    <rect x="1207.500" y="57.500" width="37" height="16" rx="2" fill="#fff" stroke="#eee" />
    <text x="1211.500" y="67.300" fontSize="7.500" textLength="13.500">USD</text>
    <path d="M1238 64.500l1.700 1.500l1.700-1.500" fill="none" stroke="#333" />

    {priceTags.map(({ label, y, fill, color }) => (
      <g key={label + y}>
        <rect
          x={color ? 1207.5 : 1207}
          y={y - 5.5}
          width={color ? 36.5 : 37}
          height="11.300"
          fill={fill}
          stroke={color || "none"}
          strokeWidth="0.900"
        />
        <text x="1212" y={y + 3} textLength="28" fill={color || "#fff"} fontWeight={color ? 400 : 600}>
          {label}
        </text>
      </g>
    ))}
    <rect x="1207" y="389.500" width="37" height="20.500" fill="#808080" />
    <g fill="#fff">
      <text x="1212" y="397.500" textLength="28" fontWeight="600">1,17751</text>
      <text x="1212" y="407" textLength="20">01:58</text>
    </g>
    <g fill="none" stroke="#e6e6e6" strokeWidth="0.900">
      <path d="M1216.500 354.500l2.500-3l2.500 3" />
      <path d="M1216.500 360l2.500 3l2.500-3" stroke="#777" />
    </g>
    <rect x="1207" y="670.500" width="30" height="4.500" fill="#808080" />
    <path d="M1213 674.500h22" stroke="#ddd" strokeDasharray="2 2" />
    <text x="1215.500" y="689" fontSize="8.500">A</text>
    <rect x="1228" y="678.500" width="13.500" height="14" rx="2" fill="#2a2a2a" />
    <text x="1232.500" y="689" fontSize="8.500" fill="#fff">L</text>

    {timeTicks.map(([label, x]) => (
      <text key={x} x={x} y="707.500" textAnchor="middle" textLength={label.length > 2 ? 20 : 8.5}>
        {label}
      </text>
    ))}
    <path d="M1224.500 701h5l2.500 4l-2.500 4h-5l-2.500-4z" fill="none" stroke="#333" strokeWidth="0.900" />
    <circle cx="1227" cy="705" r="1.500" fill="none" stroke="#333" strokeWidth="0.900" />
  </ChartSvg>
);

const ChartLegend: React.FC = () => (
  <Legend>
    <TitleRow>
      <PairLogo />
      <Title>Euro/Dólar estadounidense · 15 · OANDA</Title>
      <StatusPill>
        <StatusDot />=
      </StatusPill>
      <Ohlc $w={41}>O1,17729</Ohlc>
      <Ohlc $w={41}>H1,17763</Ohlc>
      <Ohlc $w={40}>L1,17702</Ohlc>
      <Ohlc $w={40}>C1,17751</Ohlc>
      <Ohlc $w={80}>+0,00023 (+0,02%)</Ohlc>
    </TitleRow>
    <TradeRow>
      <TradeButton $w={45} $color="#db1f45">
        1,1774<sup>4</sup>
        <span>VENDER</span>
      </TradeButton>
      <Spread>1,5</Spread>
      <TradeButton $w={48} $color="#2b5df0">
        1,1775<sup>9</sup>
        <span>COMPRAR</span>
      </TradeButton>
    </TradeRow>
    <StudyRow $w={74} $h={12}>
      Vol. · Tics <i>1,81 K</i>
    </StudyRow>
    <StudyRow $w={92} $h={15}>
      EMA <span>50 close</span> <b>1,17802</b>
    </StudyRow>
    <StudyRow $w={97} $h={14}>
      EMA <span>100 close</span> <b>1,17843</b>
    </StudyRow>
    <StudyRow $w={97} $h={14} $plain>
      KC 20 2 close <Icon d={icons.hidden} size={11} color="#222" width={1.4} />
    </StudyRow>
    <Collapse>
      <Icon d={icons.chevronUp} size={9} color="#222" width={2} />
    </Collapse>
  </Legend>
);

const leftTools = [
  [icons.trend, icons.fib, icons.pattern, icons.forecast, icons.brush, icons.text, icons.smile],
  [icons.ruler, icons.zoom],
  [icons.magnet, icons.pencilLock, icons.lock, icons.eye],
  [icons.trash],
];

export default function App() {
  return (
    <Page>
      <GlobalStyle />
      <TabBar>
        <Tab>
          <PairLogo />
          <TabSymbol $w={35}>EURUSD</TabSymbol>
          <TabText $w={13} $color="#e2304f">▼</TabText>
          <TabText $w={32}>1,17751</TabText>
          <TabText $w={31} $color="#e2304f">−0.09%</TabText>
          <TabText $w={16} $color="#666" $weight={400}>/ U</TabText>
          <Icon d={icons.close} size={11} width={1.6} />
        </Tab>
        <Slot $w={24}>
          <Icon d={icons.plain} size={13} color="#aaa" width={1.2} />
        </Slot>
        <Spacer />
        <Slot $w={34}>
          <Icon d={icons.screens} size={16} color="#999" />
        </Slot>
        <Slot $w={34}>
          <Icon
            d="M0 9a2 2 0 1 0 4 0a2 2 0 1 0-4 0M7 9a2 2 0 1 0 4 0a2 2 0 1 0-4 0M14 9a2 2 0 1 0 4 0a2 2 0 1 0-4 0"
            size={14}
            color="#999"
          />
        </Slot>
        <Slot $w={32}>
          <Icon d={icons.minimize} size={9} width={2} />
        </Slot>
        <Slot $w={34}>
          <Icon d={icons.windows} size={11} width={1.6} />
        </Slot>
        <Slot $w={33}>
          <Icon d={icons.close} size={12} width={1.4} />
        </Slot>
      </TabBar>

      <Toolbar>
        <Slot $w={34}>
          <Avatar>
            <Icon d="M4 15V3l5 5l5-5v12M6.500 14V8L9 10.500L11.500 8v6" size={11} color="#fff" width={1.6} />
          </Avatar>
          <Badge>9</Badge>
        </Slot>
        <SearchPill>
          EURUSD
          <PillIcon>
            <Icon d={icons.diamond} size={12} width={1.6} />
          </PillIcon>
        </SearchPill>
        <Slot $w={31}>
          <Icon d={icons.plus} size={16} width={1.2} />
        </Slot>
        <Divider />
        <Slot $w={26}>2m</Slot>
        <Slot $w={15}>5m</Slot>
        <Slot $w={23} $ml={4} $active>15m</Slot>
        <Slot $w={28}>30m</Slot>
        <Slot $w={16}>1h</Slot>
        <Slot $w={20}>4h</Slot>
        <Slot $w={12}>D</Slot>
        <Slot $w={14}>S</Slot>
        <Slot $w={14} $mr={4}>
          <Icon d={icons.chevron} size={10} width={1.5} />
        </Slot>
        <Divider />
        <Slot $w={30}>
          <Icon d={icons.candles} size={15} width={1.2} />
        </Slot>
        <Divider />
        <Slot $w={14} $ml={9}>
          <Icon d={icons.indicators} size={14} width={1.3} />
        </Slot>
        <Slot $w={49} $ml={4}>Indicadores</Slot>
        <Slot $w={28}>
          <Icon d={icons.chevron} size={10} width={1.5} />
        </Slot>
        <Slot $w={12} $mr={10}>
          <Icon d={icons.grid} size={14} width={1.3} />
        </Slot>
        <Divider />
        <Slot $w={15} $ml={8}>
          <Icon d={icons.alert} size={16} width={1.2} />
        </Slot>
        <Slot $w={26} $ml={3}>Alerta</Slot>
        <Slot $w={12} $ml={14}>
          <Icon d={icons.rewind} size={12} width={1.4} />
        </Slot>
        <Slot $w={57} $ml={5} $mr={9}>Reproducción</Slot>
        <Divider />
        <Slot $w={30}>
          <Icon d={icons.undo} size={12} width={1.5} />
        </Slot>
        <Slot $w={18}>
          <Icon d={icons.redo} size={12} color="#6a6a6a" width={1.5} />
        </Slot>
        <Spacer />
        <Slot $w={30}>
          <Icon d={icons.square} size={15} width={1.3} />
        </Slot>
        <Slot $w={41}>
          <LayoutName>
            Unnamed
            <small>Guardar</small>
          </LayoutName>
        </Slot>
        <Slot $w={20} $mr={2}>
          <Icon d={icons.chevron} size={10} width={1.5} />
        </Slot>
        <Divider $mr={1} />
        <Slot $w={26}>
          <Icon d={icons.quick} size={15} width={1.2} />
        </Slot>
        <Slot $w={26}>
          <Icon d={icons.hex} size={15} width={1.3} />
        </Slot>
        <Slot $w={25}>
          <Icon d={icons.full} size={14} width={1.4} />
        </Slot>
        <Slot $w={24} $mr={5}>
          <Icon d={icons.camera} size={16} width={1.2} />
        </Slot>
        <PillButton $w={59}>
          <svg width="12" height="12" viewBox="0 0 12 12">
            <circle cx="6" cy="6" r="6" fill="#fff" />
            <path d="M2 4h3.500v4.500H4V5.500H2zM8 4h2L8.300 8.500H6.500z" fill="#000" />
            <circle cx="6.600" cy="4.800" r="0.800" fill="#000" />
          </svg>
          Negocie
        </PillButton>
        <PillButton $w={49} $light>Publicar</PillButton>
      </Toolbar>

      <Body>
        <LeftBar>
          <SideItem $h={25.3}>
            <SideActive>
              <Icon d={icons.cross} size={17} />
            </SideActive>
          </SideItem>
          {leftTools.map((group, index) => (
            <React.Fragment key={index}>
              {index > 0 && <SideDivider />}
              {group.map((d) => (
                <SideItem key={d} $h={25.3}>
                  <Icon d={d} size={17} />
                </SideItem>
              ))}
            </React.Fragment>
          ))}
        </LeftBar>

        <ChartPanel>
          <Chart />
          <ChartLegend />
          <OrderTag $x={1014} $y={275} $w={112} $h={12} $color="#e8973a" $faint>
            <OrderQty $w={33}>80.000</OrderQty>
            <OrderProfit>+18,40 USD</OrderProfit>
            <OrderClose>
              <Icon d={icons.close} size={8} color="#e8973a" width={2} />
            </OrderClose>
          </OrderTag>
          <OrderTag $x={979} $y={265} $w={19} $color="#dc4a68">
            <OrderClose>
              <Icon d={icons.swap} size={9} color="#c81e45" width={1.8} />
            </OrderClose>
          </OrderTag>
          <OrderTag $x={1004} $y={265} $w={122} $color="#dc4a68">
            <OrderQty $w={41} $fill>−80.000</OrderQty>
            <OrderProfit $color="#1f9a72">+121,60 USD</OrderProfit>
            <OrderClose>
              <Icon d={icons.close} size={8} color="#c01440" width={2.6} />
            </OrderClose>
          </OrderTag>
          <OrderTag $x={1009} $y={476} $w={117} $color="#2a9d78">
            <OrderQty $w={36}>80.000</OrderQty>
            <OrderProfit>+384,80 USD</OrderProfit>
            <OrderClose>
              <Icon d={icons.close} size={8} color="#2a9d78" width={2.2} />
            </OrderClose>
          </OrderTag>
        </ChartPanel>

        <RightBar>
          {[icons.list, icons.alarm, icons.layers, icons.chat].map((d) => (
            <SideItem key={d} $h={30.5}>
              <Icon d={d} size={18} />
            </SideItem>
          ))}
          <Spacer />
          {[icons.target, icons.pyramid, icons.calendar, icons.feed, icons.bell].map((d) => (
            <SideItem key={d} $h={29.8}>
              <Icon d={d} size={18} />
            </SideItem>
          ))}
          <SideItem $h={30}>
            <AppsButton>
              <svg width="12" height="12" viewBox="0 0 12 12" fill="#111">
                {[0, 4.5, 9].map((y) => [0, 4.5, 9].map((x) => <rect key={`${x}-${y}`} x={x} y={y} width="3" height="3" />))}
              </svg>
            </AppsButton>
          </SideItem>
        </RightBar>
      </Body>
    </Page>
  );
}
